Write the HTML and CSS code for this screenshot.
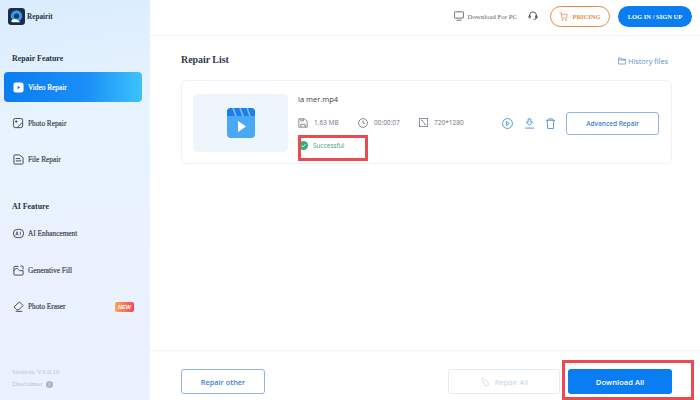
FILE: index.html
```html
<!DOCTYPE html>
<html lang="en">
<head>
<meta charset="utf-8">
<title>Repairit</title>
<link rel="stylesheet" href="styles.css">
</head>
<body>
<div class="app">
  <aside class="sidebar">
    <div class="brand">
      <svg class="logo" viewBox="0 0 18 18" width="17" height="17"><rect width="18" height="18" rx="3.500" fill="#1d2b45"/><circle cx="9" cy="8.500" r="6" fill="#2f9bf0"/><circle cx="9" cy="8.500" r="2.800" fill="#123a66"/><path d="M3 14c2-3 5-3 7-1.500l3 2.500H5z" fill="#fff"/></svg>
      <span>Repairit</span>
    </div>
    <h2 class="group-title first">Repair Feature</h2>
    <nav class="nav">
      <a class="nav-item active">
        <svg viewBox="0 0 12 12" width="11" height="11"><rect width="11" height="11" x=".5" y=".5" rx="2.500" fill="#fff"/><path d="M5 4l3 2-3 2z" fill="#1a86f5"/></svg>
        <span>Video Repair</span>
      </a>
      <a class="nav-item">
        <svg viewBox="0 0 12 12" width="11" height="11" fill="none" stroke="#39414f"><rect x=".5" y=".5" width="10" height="10" rx="2"/><circle cx="3.500" cy="3.800" r=".8" fill="#39414f"/><path d="M5 10l5-5"/></svg>
        <span>Photo Repair</span>
      </a>
      <a class="nav-item">
        <svg viewBox="0 0 12 12" width="11" height="11" fill="none" stroke="#39414f"><path d="M1 2a1 1 0 011-1h5l4 3v6a1 1 0 01-1 1H2a1 1 0 01-1-1z"/><path d="M3 5h5M3 7.500h6"/></svg>
        <span>File Repair</span>
      </a>
    </nav>
    <h2 class="group-title second">AI Feature</h2>
    <nav class="nav">
      <a class="nav-item">
        <svg viewBox="0 0 12 12" width="11" height="11" fill="none" stroke="#39414f"><rect x=".5" y="1.500" width="11" height="9" rx="4"/><path d="M3 8l1.300-4 1.300 4M3.500 7h1.600M8 4v4" stroke-width=".8"/></svg>
        <span>AI Enhancement</span>
      </a>
      <a class="nav-item">
        <svg viewBox="0 0 12 12" width="11" height="11" fill="none" stroke="#39414f"><path d="M6 1.500H2a1 1 0 00-1 1V10a1 1 0 001 1h8a1 1 0 001-1V6"/><path d="M1 6.500c1.500-3 3.500-3.500 5-1.500s3.500 1.500 5 .5"/><path d="M8 1.500c1-.8 2-.5 3 0v3"/></svg>
        <span>Generative Fill</span>
      </a>
      <a class="nav-item">
        <svg viewBox="0 0 12 12" width="11" height="11" fill="none" stroke="#39414f"><path d="M7 1l4 4-4.500 4.500H4L1 6.500z"/><path d="M3 11.300h7"/></svg>
        <span>Photo Eraser</span>
        <em class="badge">NEW</em>
      </a>
    </nav>
    <div class="side-foot">
      <p>Version: V3.0.10</p>
      <p class="disclaimer">Disclaimer <i class="info">i</i></p>
    </div>
  </aside>
  <main class="main">
    <header class="topbar">
      <span class="download-pc">
        <svg viewBox="0 0 12 12" width="10" height="10" fill="none" stroke="#4a5260"><rect x=".5" y="1" width="11" height="7.500" rx="1"/><path d="M3 11h6"/></svg>
        Download For PC
      </span>
      <svg class="support" viewBox="0 0 12 12" width="10" height="10" fill="none" stroke="#333b48"><path d="M2 7V5a4 4 0 018 0v3a2 2 0 01-2 2H6.500"/><rect x="1" y="5.500" width="2" height="3" rx="1"/><rect x="9" y="5.500" width="2" height="3" rx="1"/></svg>
      <a class="pill pricing">
        <svg viewBox="0 0 12 12" width="9" height="9" fill="none" stroke="#e58a46"><path d="M.5 1H3l1 7h6l1-5H3.500"/><circle cx="4.500" cy="10.500" r=".8"/><circle cx="9.500" cy="10.500" r=".8"/></svg>
        PRICING
      </a>
      <a class="pill login">LOG IN / SIGN UP</a>
    </header>
    <section class="content">
      <div class="list-head">
        <h1>Repair List</h1>
        <a class="history">
          <svg viewBox="0 0 12 12" width="8" height="8" fill="none" stroke="#3a86d8"><path d="M.5 10.500v-9h4l1 2h6v7zM.5 4.500h11"/></svg>
          History files
        </a>
      </div>
      <article class="card">
        <div class="thumb">
          <svg viewBox="0 0 28 30" width="28" height="30"><rect width="28" height="30" rx="4" fill="#4aa8f5"/><path d="M4 0h20a4 4 0 014 4v4H0V4a4 4 0 014-4z" fill="#1f7fe8"/><path d="M6 0l3 8M13 0l3 8M20 0l3 8" stroke="#7cc2fa" stroke-width="1.500"/><path d="M11 13l8 5.500-8 5.500z" fill="#fff"/></svg>
        </div>
        <div class="info-col">
          <div class="name">la mer.mp4</div>
          <div class="meta">
            <span class="meta-size"><svg viewBox="0 0 12 12" width="10" height="10" fill="none" stroke="#6c7480"><path d="M1 1h7l3 3v7H1z"/><path d="M3.500 11V7.500h5V11M3.500 1v2.500h3V1"/></svg>1.63 MB</span>
            <span class="meta-time"><svg viewBox="0 0 12 12" width="10" height="10" fill="none" stroke="#6c7480"><circle cx="6" cy="6" r="5.300"/><path d="M6 3v3.300h2.500"/></svg>00:00:07</span>
            <span class="meta-res"><svg viewBox="0 0 12 12" width="9" height="9" fill="none" stroke="#6c7480"><rect x=".5" y=".5" width="11" height="11"/><path d="M3 3l6 6M3 3h2M9 9H7"/></svg>720*1280</span>
          </div>
          <div class="status">
            <svg viewBox="0 0 10 10" width="9" height="9"><circle cx="5" cy="5" r="5" fill="#2fb36f"/><path d="M2.800 5l1.600 1.600 2.800-3" fill="none" stroke="#fff"/></svg>
            Successful
          </div>
        </div>
        <div class="actions">
          <svg viewBox="0 0 12 12" width="11" height="11" fill="none" stroke="#4a90d9"><circle cx="6" cy="6" r="5.400"/><path d="M4.800 3.800l3 2.200-3 2.200z"/></svg>
          <svg viewBox="0 0 12 12" width="11" height="11" fill="none" stroke="#4a90d9"><path d="M4.500 1h3v3.500h2L6 8 2.500 4.500h2zM1 11h10"/></svg>
          <svg viewBox="0 0 12 12" width="11" height="11" fill="none" stroke="#4a90d9"><path d="M1 2.500h10M4 2.500V1h4v1.500M2.300 2.500l.7 9h6l.7-9"/></svg>
        </div>
        <a class="btn outline advanced">Advanced Repair</a>
      </article>
    </section>
    <footer class="footer">
      <a class="btn outline repair-other">Repair other</a>
      <div class="footer-right">
        <a class="btn disabled">
          <svg viewBox="0 0 12 12" width="10" height="10" fill="none" stroke="#c3d3e2"><path d="M2 3l2-2 6 6c1 1 .5 3-1 3.500-1 .3-2 0-3-1z"/></svg>
          Repair All
        </a>
        <a class="btn primary">Download All</a>
      </div>
    </footer>
  </main>
</div>
<div class="highlight mark-status"></div>
<div class="highlight mark-download"></div>
</body>
</html>
```

FILE: styles.css
```css
* { box-sizing: border-box; margin: 0; padding: 0; }
html, body { width: 700px; height: 400px; overflow: hidden; background: #fff; }
body { position: relative; font-family: "Inter", "Liberation Sans", sans-serif; color: #333b48; }
a { display: inline-flex; align-items: center; }
svg { flex: none; display: block; }

.app { display: flex; width: 700px; height: 400px; }

.sidebar {
  width: 150px; height: 400px; display: flex; flex-direction: column;
  background: linear-gradient(170deg, #d9ecfd 0%, #e8f3fe 30%, #ebf1fd 100%);
  font-family: "Liberation Serif", serif; padding: 8px 8px 0 4px;
}
.brand { display: flex; align-items: center; gap: 2px; padding-left: 4px; height: 17px; font-size: 7.200px; font-weight: 700; color: #2a3342; }
.group-title { font-size: 7.900px; font-weight: 700; color: #2a3342; padding-left: 8px; line-height: 10px; }
.group-title.first { margin-top: 29px; }
.group-title.second { margin-top: 27px; }
.nav { display: flex; flex-direction: column; }
.group-title.first + .nav { margin-top: 8px; gap: 6.400px; }
.group-title.second + .nav { margin-top: 7px; gap: 6.400px; }
.nav-item { height: 30px; border-radius: 4px; padding-left: 9px; gap: 4px; font-size: 7.300px; font-weight: 400; -webkit-text-stroke: 0.2px currentColor; color: #3f4755; }
.nav-item.active { background: linear-gradient(90deg, #0a7df2 0%, #1b8ff7 60%, #3cc3fd 100%); color: #fff; }
.badge { margin-left: auto; margin-right: 8px; width: 19px; height: 10px; border-radius: 2px; background: linear-gradient(90deg, #f9a64e, #f6475e); color: #fff; font: italic 700 5.500px/10px "Liberation Sans", sans-serif; text-align: center; -webkit-text-stroke: 0; }
.side-foot { margin-top: auto; padding: 0 0 10px 8px; font-size: 7px; color: #bcc3ce; line-height: 12px; }
.disclaimer { display: flex; align-items: center; gap: 3px; }
.info { width: 7px; height: 7px; border-radius: 50%; background: #a9b5c4; color: #fff; font: normal 5px/7px "Liberation Sans", sans-serif; text-align: center; }

.main { flex: 1; display: flex; flex-direction: column; min-width: 0; }

.topbar { height: 36px; flex: none; display: flex; align-items: center; justify-content: flex-end; padding: 0 8px 3px 0; border-bottom: 1px solid #f3f4f6; }
.download-pc { display: flex; align-items: center; gap: 4px; font: 6.800px "Liberation Serif", serif; color: #5c6470; }
.support { margin-left: 11px; }
.pill { height: 21px; border-radius: 11px; justify-content: center; font: 700 6.500px "Liberation Serif", serif; }
.pricing { width: 60px; margin-left: 12px; gap: 4px; border: 1px solid #e58a46; color: #e58a46; }
.login { width: 74px; margin-left: 8px; background: #0a7df2; color: #fff; }

.content { flex: 1; padding: 15px 28px 0 31px; }
.list-head { display: flex; justify-content: space-between; align-items: center; height: 17px; }
.list-head h1 { font: 700 9.900px "Liberation Serif", serif; color: #2f3845; }
.history { gap: 2px; font: 7.300px "Open Sans", sans-serif; color: #5a92d0; margin: 3px 4px 0 0; }

.card { margin-top: 12px; height: 84px; width: 491px; display: flex; align-items: center; border: 1px solid #eff1f4; border-radius: 6px; padding: 0 12px 0 11px; }
.thumb { width: 95px; height: 58px; border-radius: 5px; background: #eef6fd; display: flex; align-items: center; justify-content: center; flex: none; align-self: flex-start; margin-top: 13px; }
.info-col { width: 205px; margin-left: 10px; }
.name { font: 7.500px "Open Sans", sans-serif; color: #333b48; line-height: 12px; position: relative; top: -1px; }
.meta { display: flex; margin-top: 11px; font: 6.500px "Open Sans", sans-serif; color: #6c7480; line-height: 12px; }
.meta span { display: flex; align-items: center; gap: 6px; }
.meta-size { width: 60px; }
.meta-time { width: 61px; }
.status { display: flex; align-items: center; gap: 5px; margin-top: 12px; padding-left: 1px; font: 6.500px "Open Sans", sans-serif; color: #3aa877; line-height: 10px; }
.actions { display: flex; gap: 10.500px; margin-top: 3px; }

.btn { height: 25px; border-radius: 3px; justify-content: center; font: 7.600px "Open Sans", sans-serif; }
.outline { border: 1px solid #8db6e0; color: #3a82d6; font-weight: 600; }
.advanced { width: 93px; font-size: 6.500px; height: 23px; margin: 3px 0 0 10px; }

.footer { height: 50px; flex: none; display: flex; align-items: center; justify-content: space-between; padding: 12px 28px 0 31px; border-top: 1px solid #f3f4f6; }
.repair-other { width: 84px; font-size: 7.400px; }
.footer-right { display: flex; gap: 8px; }
.disabled { width: 112px; gap: 5px; border: 1px solid #e4edf5; color: #c3d3e2; }
.primary { width: 104px; background: #0a7df2; color: #fff; font-weight: 600; }

.highlight { position: absolute; border: 3px solid #ea4b50; }
.mark-status { left: 298px; top: 135px; width: 70px; height: 26px; }
.mark-download { left: 562px; top: 360px; width: 132px; height: 40px; }
```
